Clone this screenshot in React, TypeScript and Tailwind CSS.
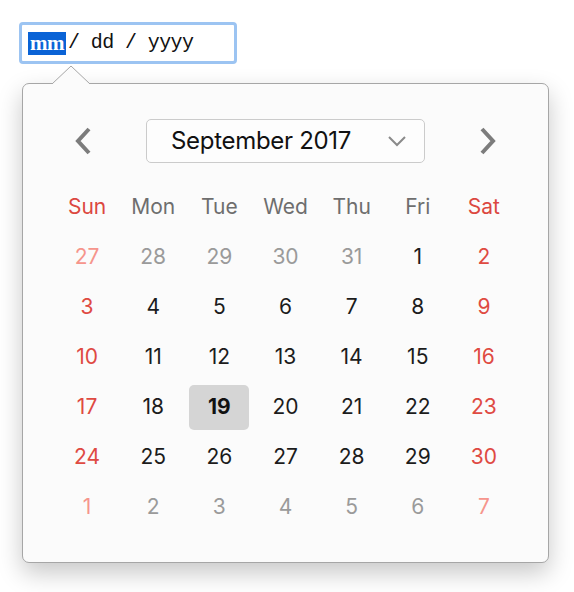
import React from "react";

const weeks: { d: number; t: "prev" | "cur" | "next" }[][] = [
  [27, 28, 29, 30, 31].map((d) => ({ d, t: "prev" as const })).concat([1, 2].map((d) => ({ d, t: "cur" as const }))),
  [3, 4, 5, 6, 7, 8, 9].map((d) => ({ d, t: "cur" as const })),
  [10, 11, 12, 13, 14, 15, 16].map((d) => ({ d, t: "cur" as const })),
  [17, 18, 19, 20, 21, 22, 23].map((d) => ({ d, t: "cur" as const })),
  [24, 25, 26, 27, 28, 29, 30].map((d) => ({ d, t: "cur" as const })),
  [1, 2, 3, 4, 5, 6, 7].map((d) => ({ d, t: "next" as const })),
];

const days = ["Sun", "Mon", "Tue", "Wed", "Thu", "Fri", "Sat"];

function cellClass(t: string, col: number) {
  const weekend = col === 0 || col === 6;
  if (t === "cur") return weekend ? "text-[#df4a42]" : "text-[#1c1c1c]";
  return weekend ? "text-[#f6958c]" : "text-[#9a9a9a]";
}

export default function App() {
  return (
    <div className="relative w-[574px] h-[592px] bg-white overflow-hidden" style={{ fontFamily: "Inter, 'Liberation Sans', sans-serif" }}>
      <div className="absolute left-[19px] top-[22px] w-[218px] h-[42px] rounded-[4px] border-[3px] border-[#9cc4f2] bg-white flex items-center pl-[6px]">
        <div className="flex items-center h-[24px] text-[20px] leading-none" style={{ fontFamily: "'Liberation Mono', 'Courier New', monospace" }}>
          <span className="bg-[#0a63d6] text-white h-[23px] w-[38px] flex items-center justify-center font-bold tracking-[-0.5px] text-[21px]" style={{ fontFamily: "'Liberation Serif', serif" }}>mm</span>
          <span className="text-[#111] ml-[2px] tracking-[-0.6px]">/ dd / yyyy</span>
        </div>
      </div>

      <div className="absolute left-[22px] top-[83px] w-[527px] h-[480px] rounded-[7px] border border-[#a6a6a6] bg-[#fbfbfb] shadow-[0_10px_24px_rgba(0,0,0,0.22)]">
        <svg className="absolute left-[29px] top-[-19px]" width="38" height="20" viewBox="0 0 38 20">
          <path d="M0 19 L19 1 L38 19" fill="#fbfbfb" stroke="#a6a6a6" strokeWidth="1" />
          <rect x="0" y="19" width="38" height="2" fill="#fbfbfb" />
        </svg>

        <div className="flex items-center justify-between px-[51px] pt-[35px]">
          <svg width="18" height="28" viewBox="0 0 18 28">
            <path d="M15 2 L4 14 L15 26" fill="none" stroke="#7c7c7c" strokeWidth="4" />
          </svg>
          <div className="w-[279px] h-[44px] rounded-[5px] border border-[#cbcbcb] bg-[#fdfdfd] flex items-center pl-[24px] pr-[17px] justify-between">
            <span className="text-[24px] text-[#111] tracking-[-0.3px]">September 2017</span>
            <svg width="20" height="12" viewBox="0 0 20 12">
              <path d="M2 2 L10 10 L18 2" fill="none" stroke="#8a8a8a" strokeWidth="2" />
            </svg>
          </div>
          <svg width="18" height="28" viewBox="0 0 18 28">
            <path d="M3 2 L14 14 L3 26" fill="none" stroke="#7c7c7c" strokeWidth="4" />
          </svg>
        </div>

        <div className="px-[31px] mt-[19px]">
          <div className="grid grid-cols-7">
            {days.map((d, i) => (
              <div key={d} className={`h-[50px] flex items-center justify-center text-[21px] ${i === 0 || i === 6 ? "text-[#dc4740]" : "text-[#6e6e6e]"}`}>
                {d}
              </div>
            ))}
          </div>
          {weeks.map((w, wi) => (
            <div key={wi} className="grid grid-cols-7">
              {w.map((c, ci) => {
                const sel = c.t === "cur" && c.d === 19;
                return (
                  <div key={ci} className="h-[50px] flex items-center justify-center">
                    {sel ? (
                      <div className="w-[60px] h-[45px] rounded-[5px] bg-[#d5d5d5] flex items-center justify-center text-[21px] font-bold text-[#111]">
                        {c.d}
                      </div>
                    ) : (
                      <span className={`text-[21px] ${cellClass(c.t, ci)}`}>{c.d}</span>
                    )}
                  </div>
                );
              })}
            </div>
          ))}
        </div>
      </div>
    </div>
  );
}
